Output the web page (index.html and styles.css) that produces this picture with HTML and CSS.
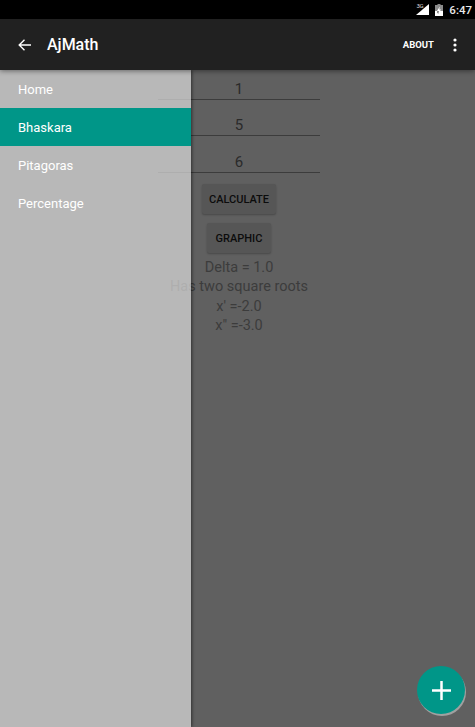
FILE: index.html
```html
<!DOCTYPE html>
<html lang="en">
<head>
<meta charset="utf-8">
<title>AjMath</title>
<link rel="stylesheet" href="styles.css">
</head>
<body>
<div class="screen">
  <div class="status">
    <span class="net">3G</span>
    <svg class="signal" width="13" height="11" viewBox="0 0 13 11"><path d="M13 0V11H0Z" fill="#fff"/></svg>
    <svg class="battery" width="8" height="12" viewBox="0 0 8 12"><path d="M2.500 0H5.500V1H8V12H0V1H2.500Z" fill="#8a8a8a"/><path d="M0 7H8V12H0Z" fill="#fff"/><path d="M4.800 2.500L2 7H3.700L3.200 10L6 5.500H4.300Z" fill="#fff"/><path d="M3.200 10L3.700 7H2.600L2 8Z" fill="#555"/></svg>
    <span class="time">6:47</span>
  </div>
  <header class="appbar">
    <svg class="back" width="13" height="12" viewBox="0 0 13 12"><path d="M13 6H1.500M6.500 0.700L1.200 6L6.500 11.300" fill="none" stroke="#fff" stroke-width="1.400"/></svg>
    <span class="title">AjMath</span>
    <span class="about">ABOUT</span>
    <svg class="more" width="4" height="14" viewBox="0 0 4 14"><circle cx="2" cy="2" r="1.600" fill="#fff"/><circle cx="2" cy="7" r="1.600" fill="#fff"/><circle cx="2" cy="12" r="1.600" fill="#fff"/></svg>
  </header>
  <main class="content">
    <div class="field">1</div>
    <div class="field">5</div>
    <div class="field">6</div>
    <button class="btn btn-calc">CALCULATE</button>
    <button class="btn btn-graph">GRAPHIC</button>
    <div class="results">
      <div>Delta = 1.0</div>
      <div>Has two square roots</div>
      <div>x' =-2.0</div>
      <div>x" =-3.0</div>
    </div>
  </main>
  <nav class="drawer">
    <a class="item">Home</a>
    <a class="item active">Bhaskara</a>
    <a class="item">Pitagoras</a>
    <a class="item">Percentage</a>
  </nav>
  <button class="fab" aria-label="Add">
    <svg width="19" height="19" viewBox="0 0 19 19"><path d="M9.500 0V19M0 9.500H19" stroke="#fff" stroke-width="2.500"/></svg>
  </button>
</div>
</body>
</html>
```
FILE: styles.css
```css
* { box-sizing: border-box; }
html, body { margin: 0; padding: 0; }
body { font-family: Roboto, "Liberation Sans", sans-serif; }
.screen {
  position: relative;
  width: 475px;
  height: 727px;
  overflow: hidden;
  background: #606060;
  display: flex;
  flex-direction: column;
}
.status {
  height: 19px;
  background: #000;
  color: #fff;
  display: flex;
  align-items: center;
  justify-content: flex-end;
  padding-right: 3px;
  flex: none;
}
.net {
  align-self: flex-start;
  margin-top: 3px;
  margin-right: -7px;
  font-size: 6px;
  line-height: 6px;
  letter-spacing: -0.3px;
  color: #ddd;
  position: relative;
  z-index: 1;
}
.signal { margin-right: 6px; }
.battery { margin-right: 6px; }
.time { font-size: 11.500px; font-weight: 500; color: #e8e8e8; }
.appbar {
  position: relative;
  z-index: 3;
  height: 51px;
  flex: none;
  background: #212121;
  display: flex;
  align-items: center;
  padding: 0 18px;
  color: #fff;
  box-shadow: 0 1px 5px rgba(0, 0, 0, 0.45);
}
.title { font-size: 16px; font-weight: 500; margin-left: 16px; }
.about { font-size: 9.500px; font-weight: 700; margin-left: auto; margin-right: 19px; }
.content {
  flex: 1;
  display: flex;
  flex-direction: column;
  align-items: center;
  padding: 0 0 0 3px;
  color: #333;
}
.field {
  width: 162px;
  height: 30px;
  margin-top: 6.300px;
  border-bottom: 1px solid #3c3c3c;
  text-align: center;
  font-size: 15px;
  line-height: 38px;
  color: #2a2a2a;
}
.field:first-child { margin-top: 0; }
.btn {
  display: block;
  border: 0;
  border-radius: 2px;
  background: #565656;
  box-shadow: 0 1px 2px rgba(0, 0, 0, 0.25);
  color: #0c0c0c;
  font: 500 11px Roboto, sans-serif;
  height: 30px;
  padding: 1px 0 0;
}
.btn-calc { width: 74px; margin-top: 11px; }
.btn-graph { width: 64px; margin-top: 9px; }
.results {
  margin-top: 5px;
  font-size: 14.500px;
  line-height: 19.500px;
  text-align: center;
  color: #3c3c3c;
}
.drawer {
  position: absolute;
  z-index: 2;
  left: 0;
  top: 70px;
  bottom: 0;
  width: 191px;
  background: rgba(222, 222, 222, 0.7);
  box-shadow: 1px 0 3px rgba(0, 0, 0, 0.5);
  display: flex;
  flex-direction: column;
}
.item {
  height: 38px;
  padding-left: 18px;
  font-size: 13px;
  line-height: 39px;
  color: #fff;
}
.active { background: #009688; }
.fab {
  position: absolute;
  z-index: 4;
  right: 10px;
  bottom: 13px;
  width: 48px;
  height: 48px;
  padding: 0;
  border: 0;
  border-radius: 50%;
  background: #009688;
  box-shadow: 1px 2px 0 #a0a0a0;
  display: flex;
  align-items: center;
  justify-content: center;
}
```
